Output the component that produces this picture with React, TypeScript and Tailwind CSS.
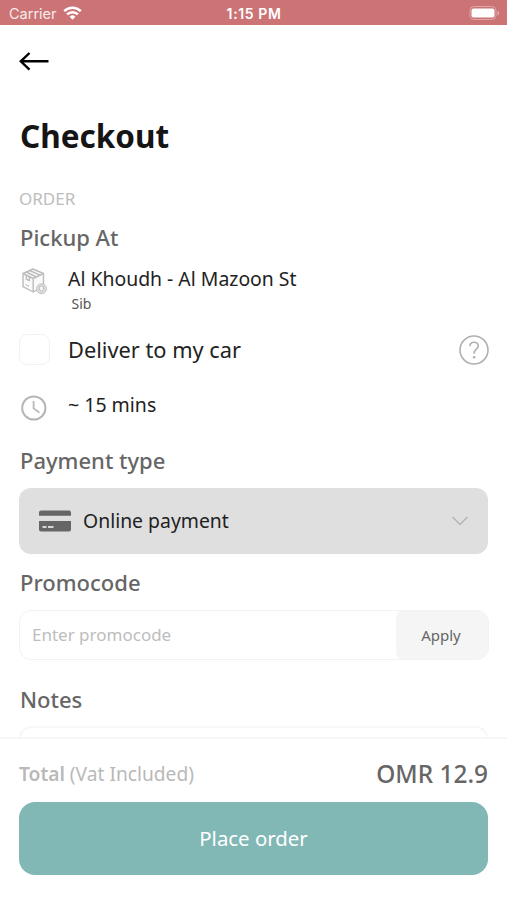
import React from "react";

interface SectionTitleProps {
  children: React.ReactNode;
}

function StatusBar() {
  return (
    <div className="flex h-[25px] shrink-0 items-center bg-[#cb7375] pr-2 pl-[9px] font-[Inter,sans-serif] text-white">
      <div className="flex flex-1 items-center gap-[6px]">
        <span className="pt-0.5 text-[14.5px] leading-5 text-white/85">Carrier</span>
        <svg width="19" height="14" viewBox="0 0 19 14" fill="none" stroke="currentColor" strokeWidth="2.6">
          <path d="M1.2 5.2a11.8 11.8 0 0 1 16.6 0" />
          <path d="M4.1 8.4a7.7 7.7 0 0 1 10.8 0" />
          <path d="M9.5 13.7 6.6 10.8a4.1 4.1 0 0 1 5.8 0z" fill="currentColor" stroke="none" />
        </svg>
      </div>
      <span className="pt-0.5 text-[14px] leading-5 font-semibold tracking-[0.6px]">1:15 PM</span>
      <div className="flex flex-1 justify-end">
        <svg width="30" height="14" viewBox="0 0 30 14">
          <rect x="1" y="0.5" width="26" height="13" rx="4" fill="none" stroke="#fff" strokeOpacity="0.35" />
          <rect x="2.5" y="2.5" width="23" height="9" rx="2" fill="#fff" />
          <path d="M28.5 5v4a2 2 0 0 0 0-4z" fill="#fff" fillOpacity="0.4" />
        </svg>
      </div>
    </div>
  );
}

function SectionTitle({ children }: SectionTitleProps) {
  return <h2 className="pl-px text-[22px] leading-[30px] font-medium text-[#666]">{children}</h2>;
}

function PackageIcon() {
  return (
    <svg width="27" height="28" viewBox="0 0 27 28" fill="none" stroke="#bcbcbc" strokeWidth="1.4" strokeLinejoin="round">
      <path d="M11 1 1 5.5v13.200l10.200 5.300 10.300-5.300V5.500z" fill="#fafafa" />
      <path d="M1 5.500 11.200 10.500 21.500 5.500M11.200 10.500V24" />
      <path d="M4.300 4 14.500 9M7.700 2.500 18 7.200M4.300 7.200v4l3 1.500v-4" />
      <path d="m3.500 16.500 3.500 1.800" strokeWidth="1" />
      <circle cx="19.500" cy="20.800" r="5" fill="#dedede" stroke="#c4c4c4" strokeWidth="1" />
      <path d="M19.500 24c-1.300-1.500-2.200-2.700-2.200-3.900a2.200 2.200 0 0 1 4.400 0c0 1.200-.900 2.400-2.200 3.900z" fill="#f5f5f5" strokeWidth="1" />
    </svg>
  );
}

function ClockIcon() {
  return (
    <svg width="26" height="26" viewBox="0 0 26 26" fill="none" stroke="#b5b5b5" strokeWidth="2">
      <circle cx="12.8" cy="13" r="11.6" />
      <path d="M12.6 6v7.4l5.8 4.2" strokeWidth="1.7" />
    </svg>
  );
}

function HelpIcon() {
  return (
    <svg width="30" height="30" viewBox="0 0 30 30" fill="none" stroke="#b0b0b0" strokeWidth="1.6">
      <circle cx="15" cy="15" r="14" />
      <path d="M10.8 11.300c0-2.500 1.700-4.100 4.200-4.100s4.200 1.600 4.200 3.800c0 3.400-4.100 3.500-4.100 6.900v.8" />
      <circle cx="15.1" cy="22.3" r="1.3" fill="#b0b0b0" stroke="none" />
    </svg>
  );
}

function CardIcon() {
  return (
    <svg width="32" height="22" viewBox="0 0 32 22" fill="#666">
      <path d="M2 0.5h28a2 2 0 0 1 2 2v3.2H0V2.5a2 2 0 0 1 2-2z" />
      <path d="M0 11h32v8.5a2 2 0 0 1-2 2H2a2 2 0 0 1-2-2z" />
      <path d="M3.5 17h4M9 17h5.5" stroke="#d5d5d5" strokeWidth="2" />
    </svg>
  );
}

function App() {
  return (
    <div className="flex h-[900px] w-full flex-col overflow-hidden bg-white font-['Noto_Sans',sans-serif] text-[#222]">
      <StatusBar />

      <main className="min-h-0 flex-1 overflow-hidden px-[19px]">
        <button className="mt-[26px] block" aria-label="Back">
          <svg width="30" height="20" viewBox="0 0 30 20" fill="none" stroke="#000" strokeWidth="2.4">
            <path d="M29.5 10.3H1.8M10.5 2 1.8 10.3l8.7 8.3" />
          </svg>
        </button>

        <h1 className="mt-[45px] pl-px text-[31.5px] leading-10 font-bold text-[#151515]">Checkout</h1>
        <p className="mt-[31px] text-[17px] leading-6 text-[#bdbdbd]">ORDER</p>

        <div className="mt-[11px]">
          <SectionTitle>Pickup At</SectionTitle>
        </div>
        <div className="mt-[13px] flex">
          <div className="w-[49px] shrink-0 pt-[3px] pl-[3px]">
            <PackageIcon />
          </div>
          <div>
            <p className="text-[19.4px] leading-7">Al Khoudh - Al Mazoon St</p>
            <p className="mt-px pl-[3.5px] text-[14px] leading-5 text-[#555]">Sib</p>
          </div>
        </div>

        <div className="mt-5 flex h-[31px] items-center">
          <div className="size-[31px] rounded-lg border border-[#f2f2f2]" />
          <span className="ml-[18px] flex-1 pt-px text-[21.8px] leading-8">Deliver to my car</span>
          <div className="-mr-px">
            <HelpIcon />
          </div>
        </div>

        <div className="mt-[26px] flex h-7">
          <div className="w-[49px] shrink-0 pt-[4px] pl-[2px]">
            <ClockIcon />
          </div>
          <span className="text-[19.5px] leading-7">~ 15 mins</span>
        </div>

        <div className="mt-[26px]">
          <SectionTitle>Payment type</SectionTitle>
        </div>
        <div className="mt-[13px] flex h-[66px] items-center rounded-xl bg-[#dfdfdf] pr-5 pl-5">
          <CardIcon />
          <span className="ml-3 flex-1 text-[19.4px] leading-7">Online payment</span>
          <svg width="16" height="10" viewBox="0 0 16 10" fill="none" stroke="#b5b5b5" strokeWidth="1.5">
            <path d="m0.5 1 7.5 7.5L15.5 1" />
          </svg>
        </div>

        <div className="mt-[13px]">
          <SectionTitle>Promocode</SectionTitle>
        </div>
        <div className="-mr-px mt-[13px] flex h-[50px] items-center overflow-hidden rounded-xl border border-[#f2f2f2]">
          <span className="flex-1 pl-3 text-[17px] leading-6 text-[#bdbdbd]">Enter promocode</span>
          <button className="h-[50px] w-[92px] rounded-lg bg-[#f5f5f5] pr-0.5 text-[15px] text-[#666]">Apply</button>
        </div>

        <div className="mt-6">
          <SectionTitle>Notes</SectionTitle>
        </div>
        <div className="mt-3 h-24 rounded-xl border-2 border-[#f7f7f7]" />
      </main>

      <footer className="h-[163px] shrink-0 border-t-2 border-[#f6f6f6] px-[19px] pt-[19px]">
        <div className="flex h-8 items-center justify-between">
          <p className="text-[19.2px] text-[#b9b9b9]">
            <span className="font-semibold">Total</span> (Vat Included)
          </p>
          <p className="text-[24.4px] font-medium text-[#666]">OMR 12.9</p>
        </div>
        <button className="mt-[12px] h-[73px] w-full rounded-2xl bg-[#81b8b5] text-[20.4px] text-white">
          Place order
        </button>
      </footer>
    </div>
  );
}

export default App;
